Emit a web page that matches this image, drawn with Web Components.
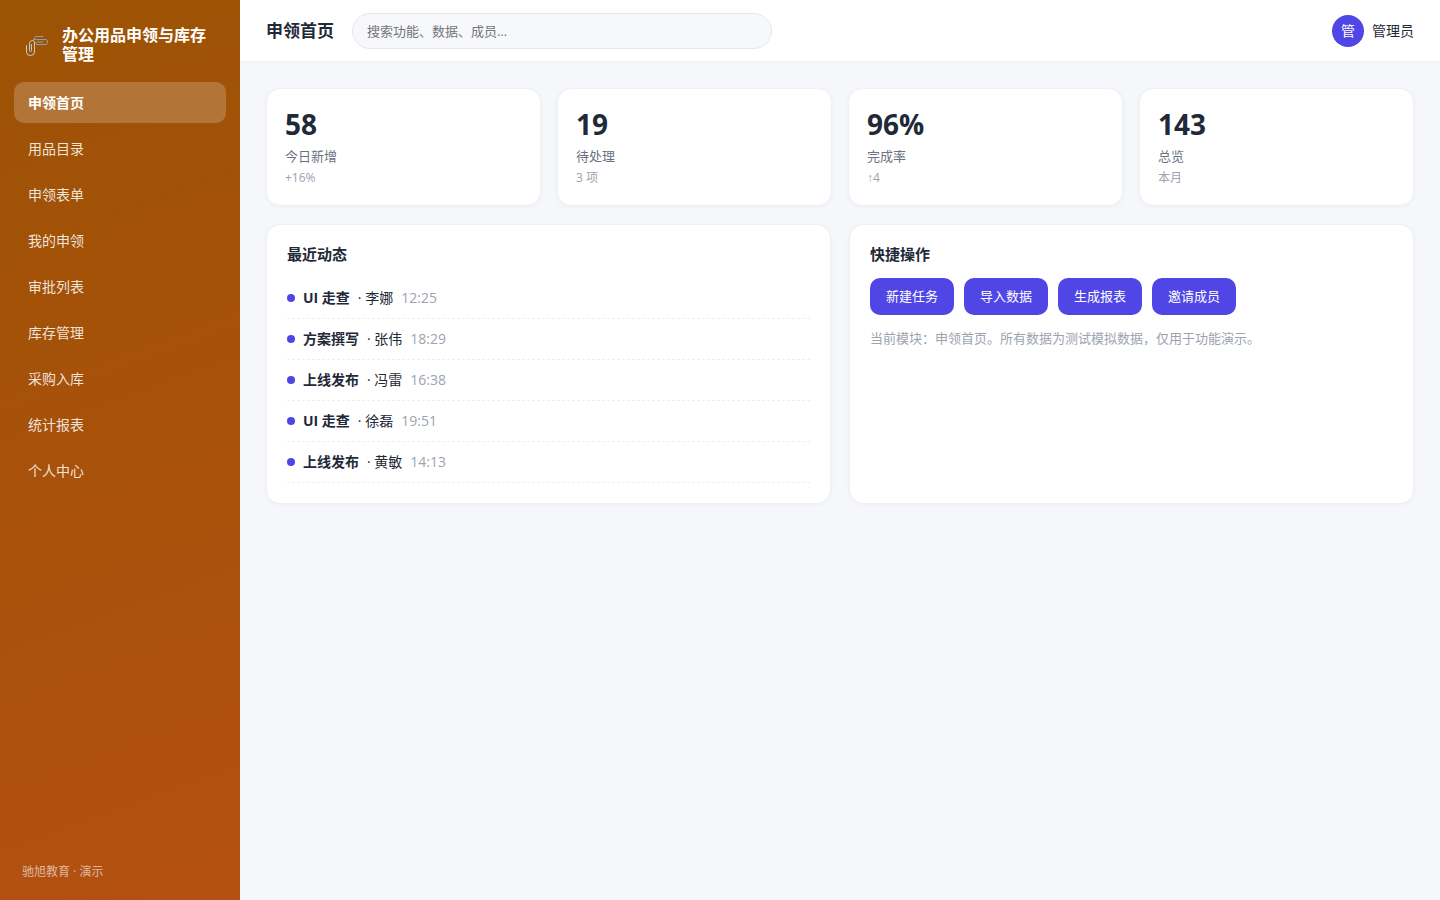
<!DOCTYPE html>
<html lang="zh-CN">
<head>
<meta charset="utf-8">
<meta name="viewport" content="width=device-width, initial-scale=1">
<title>办公用品申领与库存管理</title>
<style>
  body {
    margin: 0;
    background: #f5f7fb;
    color: #1f2937;
    font-family: "Open Sans", "Liberation Sans", "Noto Sans CJK SC", sans-serif;
    font-size: 14px;
    line-height: 20px;
    --accent: #4f46e5;
    --muted: #9ca3af;
    --line: #eef0f4;
  }
</style>
</head>
<body>
<office-app></office-app>

<script>
const define = (name, html) => {
  const template = document.createElement('template');
  template.innerHTML = html;
  customElements.define(name, class extends HTMLElement {
    constructor() {
      super();
      this.attachShadow({ mode: 'open' }).append(template.content.cloneNode(true));
    }
  });
};

define('clip-logo', `
  <style>
    :host { display: block; width: 24px; height: 24px; }
    svg { display: block; }
  </style>
  <svg width="24" height="24" viewBox="0 0 24 24" fill="none" stroke-linecap="round" stroke-linejoin="round" aria-hidden="true">
    <path d="M17 3.500H9.500L7.500 6.500H20Q21.500 6.500 21.500 9T20 11.500H11Q9.500 11.500 9.500 9.500M11 9H17" stroke="#939da6"/>
    <path d="M.5 12.500V19.500Q.5 22.500 4.500 22.500T8.500 19V9.500Q8.500 7.500 6.500 7.500T3.500 9.500V17.500Q3.500 18.500 4.500 18.500T5.500 17.500V11.500" stroke="#c3cad2"/>
  </svg>`);

define('nav-item', `
  <style>
    :host { display: block; }
    ::slotted(a) {
      display: block;
      padding: 11px 14px;
      border-radius: 10px;
      line-height: 19px;
      color: rgba(255, 255, 255, .85);
      text-decoration: none;
    }
    :host([active]) ::slotted(a) { background: rgba(255, 255, 255, .2); color: #fff; font-weight: 700; }
  </style>
  <slot></slot>`);

define('side-bar', `
  <style>
    :host {
      display: flex;
      flex-direction: column;
      box-sizing: border-box;
      padding: 26px 14px 18px;
      background: linear-gradient(160deg, #9c5304, #b45012);
      color: #fff;
    }
    .brand { display: flex; align-items: center; gap: 12px; padding: 0 10px 0 12px; margin-bottom: 18px; }
    clip-logo { flex: none; }
    .name { font-size: 16px; font-weight: 700; line-height: 19px; }
    nav { display: flex; flex-direction: column; gap: 5px; }
    footer { margin-top: auto; padding: 0 8px; font-size: 12px; line-height: 20px; color: rgba(255, 255, 255, .6); }
  </style>
  <div class="brand"><clip-logo></clip-logo><div class="name"><slot name="name"></slot></div></div>
  <nav><slot></slot></nav>
  <footer><slot name="footer"></slot></footer>`);

define('top-bar', `
  <style>
    :host {
      display: flex;
      align-items: center;
      gap: 18px;
      padding: 13px 26px 12px;
      background: #fff;
      border-bottom: 1px solid var(--line);
    }
    h1 { margin: 0; font-size: 17px; line-height: 26px; font-weight: 700; white-space: nowrap; }
    label { flex: 0 1 420px; min-width: 0; display: flex; }
    input {
      box-sizing: border-box;
      width: 100%;
      height: 36px;
      margin: 0;
      padding: 0 14px;
      border: 1px solid #e5e7eb;
      border-radius: 18px;
      background: #f7f8fc;
      color: inherit;
      font: inherit;
      font-size: 13px;
      outline: none;
    }
    input::placeholder { color: #757575; }
    .user { display: flex; align-items: center; gap: 8px; margin-left: auto; white-space: nowrap; }
    .avatar {
      width: 32px;
      line-height: 32px;
      border-radius: 50%;
      background: var(--accent);
      color: #fff;
      text-align: center;
    }
  </style>
  <h1><slot></slot></h1>
  <label><input type="search" aria-label="搜索" placeholder="搜索功能、数据、成员…"></label>
  <div class="user"><span class="avatar">管</span><slot name="user"></slot></div>`);

define('stat-card', `
  <style>
    :host {
      display: block;
      padding: 18px;
      background: #fff;
      border: 1px solid var(--line);
      border-radius: 14px;
      box-shadow: 0 1px 4px rgba(31, 41, 55, .04);
    }
    .value { font-size: 28px; line-height: 34px; font-weight: 700; }
    .label { margin-top: 6px; font-size: 13px; line-height: 18px; color: #6b7280; }
    .note { margin-top: 4px; font-size: 12px; line-height: 18px; color: var(--muted); }
  </style>
  <div class="value"><slot name="value"></slot></div>
  <div class="label"><slot></slot></div>
  <div class="note"><slot name="note"></slot></div>`);

define('info-panel', `
  <style>
    :host {
      display: block;
      padding: 20px;
      background: #fff;
      border: 1px solid var(--line);
      border-radius: 14px;
      box-shadow: 0 1px 4px rgba(31, 41, 55, .04);
    }
    h2 { margin: 0 0 14px; font-size: 15px; line-height: 19px; font-weight: 700; }
  </style>
  <h2><slot name="title"></slot></h2>
  <slot></slot>`);

define('activity-item', `
  <style>
    :host {
      display: flex;
      align-items: center;
      gap: 8px;
      padding: 10px 0;
      border-bottom: 1px dashed #eceef1;
    }
    i { width: 8px; height: 8px; border-radius: 50%; background: var(--accent); }
    b { font-weight: 700; }
    .time { color: var(--muted); }
  </style>
  <i></i><b><slot name="task"></slot></b><span>· <slot></slot></span><span class="time"><slot name="time"></slot></span>`);

define('action-button', `
  <style>
    :host { display: block; }
    button {
      display: block;
      margin: 0;
      padding: 8px 16px;
      border: 0;
      border-radius: 10px;
      background: var(--accent);
      color: #fff;
      font: inherit;
      font-size: 13px;
      line-height: 21px;
      cursor: pointer;
    }
  </style>
  <button type="button"><slot></slot></button>`);

define('office-app', `
  <style>
    :host { display: grid; grid-template-columns: 240px minmax(0, 1fr); min-height: 100vh; }
    main { padding: 26px; }
    .stats { display: grid; grid-template-columns: repeat(4, minmax(0, 1fr)); gap: 16px; margin-bottom: 18px; }
    .panels { display: grid; grid-template-columns: repeat(2, minmax(0, 1fr)); gap: 18px; }
    .actions { display: flex; flex-wrap: wrap; gap: 10px; }
    .hint { margin: 14px 0 0; font-size: 13px; line-height: 18px; color: var(--muted); }
  </style>
  <side-bar>
    <span slot="name">办公用品申领与库存管理</span>
    <nav-item active><a href="#home" aria-current="page">申领首页</a></nav-item>
    <nav-item><a href="#catalog">用品目录</a></nav-item>
    <nav-item><a href="#form">申领表单</a></nav-item>
    <nav-item><a href="#mine">我的申领</a></nav-item>
    <nav-item><a href="#approvals">审批列表</a></nav-item>
    <nav-item><a href="#stock">库存管理</a></nav-item>
    <nav-item><a href="#purchase">采购入库</a></nav-item>
    <nav-item><a href="#reports">统计报表</a></nav-item>
    <nav-item><a href="#profile">个人中心</a></nav-item>
    <span slot="footer">驰旭教育 · 演示</span>
  </side-bar>
  <div>
    <top-bar>申领首页<span slot="user">管理员</span></top-bar>
    <main>
      <section class="stats">
        <stat-card><span slot="value">58</span>今日新增<span slot="note">+16%</span></stat-card>
        <stat-card><span slot="value">19</span>待处理<span slot="note">3 项</span></stat-card>
        <stat-card><span slot="value">96%</span>完成率<span slot="note">↑4</span></stat-card>
        <stat-card><span slot="value">143</span>总览<span slot="note">本月</span></stat-card>
      </section>
      <section class="panels">
        <info-panel>
          <span slot="title">最近动态</span>
          <activity-item><span slot="task">UI 走查</span>李娜<time slot="time">12:25</time></activity-item>
          <activity-item><span slot="task">方案撰写</span>张伟<time slot="time">18:29</time></activity-item>
          <activity-item><span slot="task">上线发布</span>冯雷<time slot="time">16:38</time></activity-item>
          <activity-item><span slot="task">UI 走查</span>徐磊<time slot="time">19:51</time></activity-item>
          <activity-item><span slot="task">上线发布</span>黄敏<time slot="time">14:13</time></activity-item>
        </info-panel>
        <info-panel>
          <span slot="title">快捷操作</span>
          <div class="actions">
            <action-button>新建任务</action-button>
            <action-button>导入数据</action-button>
            <action-button>生成报表</action-button>
            <action-button>邀请成员</action-button>
          </div>
          <p class="hint">当前模块：申领首页。所有数据为测试模拟数据，仅用于功能演示。</p>
        </info-panel>
      </section>
    </main>
  </div>`);
</script>
</body>
</html>
